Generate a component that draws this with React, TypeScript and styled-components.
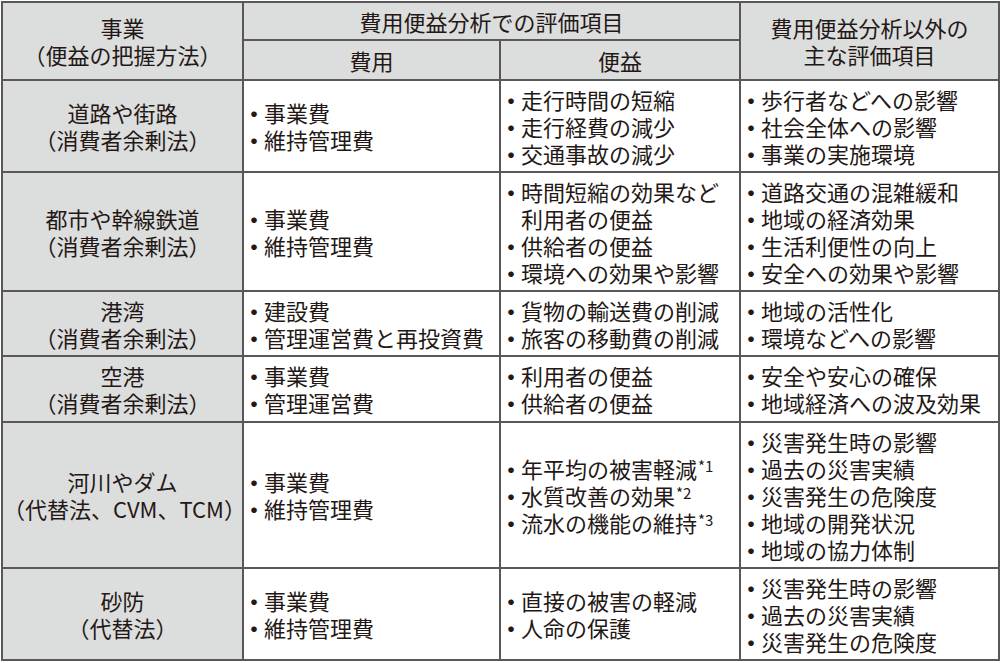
import React from 'react';
import styled, { createGlobalStyle } from 'styled-components';

const GlobalStyle = createGlobalStyle`
  html, body {
    margin: 0;
    padding: 0;
    background: #ffffff;
  }
  body {
    font-family: "Noto Sans CJK JP", "Noto Sans", sans-serif;
    color: #231815;
  }
`;

const Page = styled.div`
  padding: 1px 0 0 1px;
`;

const Table = styled.table`
  border-collapse: collapse;
  width: 997px;
  table-layout: fixed;
  font-size: 22px;
  line-height: 27px;
  border: 2px solid #595757;
`;

const HeadCell = styled.th<{ $h?: number }>`
  background: #dcdddd;
  border: 2px solid #595757;
  font-weight: 400;
  text-align: center;
  vertical-align: middle;
  padding: 0;
  height: ${({ $h }) => ($h ? `${$h}px` : 'auto')};
`;

const NameCell = styled.td`
  background: #dcdddd;
  border: 2px solid #595757;
  text-align: center;
  vertical-align: middle;
  padding: 0;
`;

const ItemCell = styled.td`
  border: 2px solid #595757;
  vertical-align: middle;
  padding: 0;
  white-space: nowrap;
`;

const Row = styled.tr<{ $h: number }>`
  height: ${({ $h }) => $h}px;
`;

const Item = styled.div`
  display: flex;
`;

const Bullet = styled.span`
  flex: none;
  width: 22px;
  margin-left: -1px;
  margin-right: -1px;
  text-align: center;
  font-weight: 700;
`;

const Note = styled.sup`
  font-size: 15px;
  line-height: 0;
  vertical-align: 6px;
  margin-left: 1px;
`;

type Entry = { text: string; note?: string; cont?: boolean };

interface Project {
  name: string;
  method: string;
  height: number;
  cost: Entry[];
  benefit: Entry[];
  other: Entry[];
}

const e = (text: string, note?: string): Entry => ({ text, note });

const projects: Project[] = [
  {
    name: '道路や街路',
    method: '（消費者余剰法）',
    height: 92,
    cost: [e('事業費'), e('維持管理費')],
    benefit: [e('走行時間の短縮'), e('走行経費の減少'), e('交通事故の減少')],
    other: [e('歩行者などへの影響'), e('社会全体への影響'), e('事業の実施環境')],
  },
  {
    name: '都市や幹線鉄道',
    method: '（消費者余剰法）',
    height: 119,
    cost: [e('事業費'), e('維持管理費')],
    benefit: [
      e('時間短縮の効果など'),
      { text: '利用者の便益', cont: true },
      e('供給者の便益'),
      e('環境への効果や影響'),
    ],
    other: [e('道路交通の混雑緩和'), e('地域の経済効果'), e('生活利便性の向上'), e('安全への効果や影響')],
  },
  {
    name: '港湾',
    method: '（消費者余剰法）',
    height: 65,
    cost: [e('建設費'), e('管理運営費と再投資費')],
    benefit: [e('貨物の輸送費の削減'), e('旅客の移動費の削減')],
    other: [e('地域の活性化'), e('環境などへの影響')],
  },
  {
    name: '空港',
    method: '（消費者余剰法）',
    height: 66,
    cost: [e('事業費'), e('管理運営費')],
    benefit: [e('利用者の便益'), e('供給者の便益')],
    other: [e('安全や安心の確保'), e('地域経済への波及効果')],
  },
  {
    name: '河川やダム',
    method: '（代替法、CVM、TCM）',
    height: 146,
    cost: [e('事業費'), e('維持管理費')],
    benefit: [e('年平均の被害軽減', '*1'), e('水質改善の効果', '*2'), e('流水の機能の維持', '*3')],
    other: [e('災害発生時の影響'), e('過去の災害実績'), e('災害発生の危険度'), e('地域の開発状況'), e('地域の協力体制')],
  },
  {
    name: '砂防',
    method: '（代替法）',
    height: 92,
    cost: [e('事業費'), e('維持管理費')],
    benefit: [e('直接の被害の軽減'), e('人命の保護')],
    other: [e('災害発生時の影響'), e('過去の災害実績'), e('災害発生の危険度')],
  },
];

const ItemList: React.FC<{ items: Entry[] }> = ({ items }) => (
  <>
    {items.map((it, i) => (
      <Item key={i}>
        <Bullet>{it.cont ? '' : '・'}</Bullet>
        <span>
          {it.text}
          {it.note && <Note>{it.note}</Note>}
        </span>
      </Item>
    ))}
  </>
);

const App: React.FC = () => (
  <Page>
    <GlobalStyle />
    <Table>
      <colgroup>
        <col style={{ width: 241 }} />
        <col style={{ width: 257 }} />
        <col style={{ width: 240 }} />
        <col style={{ width: 259 }} />
      </colgroup>
      <thead>
        <tr>
          <HeadCell rowSpan={2}>
            事業
            <br />
            （便益の把握方法）
          </HeadCell>
          <HeadCell colSpan={2} $h={36}>
            費用便益分析での評価項目
          </HeadCell>
          <HeadCell rowSpan={2}>
            費用便益分析以外の
            <br />
            主な評価項目
          </HeadCell>
        </tr>
        <tr>
          <HeadCell $h={38}>費用</HeadCell>
          <HeadCell $h={38}>便益</HeadCell>
        </tr>
      </thead>
      <tbody>
        {projects.map((p) => (
          <Row key={p.name} $h={p.height}>
            <NameCell>
              {p.name}
              <br />
              {p.method}
            </NameCell>
            <ItemCell>
              <ItemList items={p.cost} />
            </ItemCell>
            <ItemCell>
              <ItemList items={p.benefit} />
            </ItemCell>
            <ItemCell>
              <ItemList items={p.other} />
            </ItemCell>
          </Row>
        ))}
      </tbody>
    </Table>
  </Page>
);

export default App;
